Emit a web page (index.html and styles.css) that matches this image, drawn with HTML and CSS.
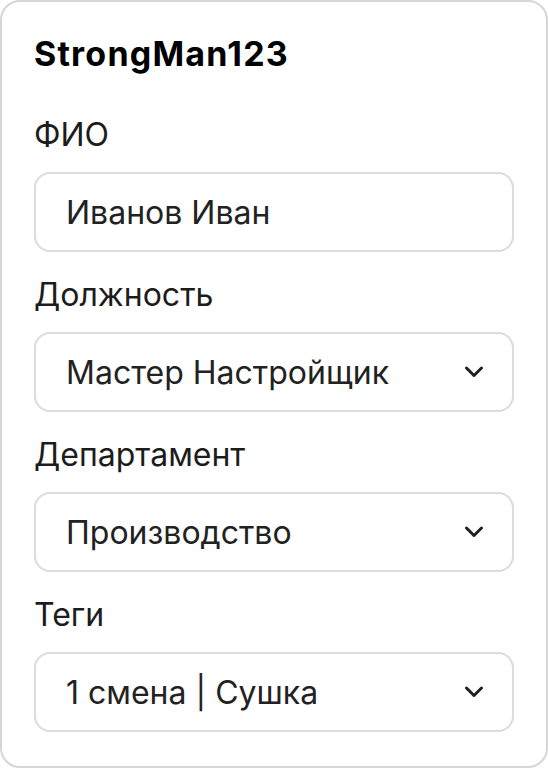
FILE: index.html
```html
<!DOCTYPE html>
<html lang="ru">
<head>
    <meta charset="UTF-8">
    <meta name="viewport" content="width=device-width, initial-scale=1.0">
    <title>Профиль</title>
    <link rel="stylesheet" href="styles.css">
</head>
<body>
    <div class="card">
        <h2 class="user-name">StrongMan123</h2>

        <div class="field">
            <label class="field-label">ФИО</label>
            <div class="field-box">Иванов Иван</div>
        </div>

        <div class="field">
            <label class="field-label">Должность</label>
            <div class="field-box select">
                <span>Мастер Настройщик</span>
                <svg class="chevron" viewBox="0 0 20 12"><path d="M2.5 2L10 9.5 17.5 2"/></svg>
            </div>
        </div>

        <div class="field">
            <label class="field-label">Департамент</label>
            <div class="field-box select">
                <span>Производство</span>
                <svg class="chevron" viewBox="0 0 20 12"><path d="M2.5 2L10 9.5 17.5 2"/></svg>
            </div>
        </div>

        <div class="field">
            <label class="field-label">Теги</label>
            <div class="field-box select">
                <span>1 смена | Сушка</span>
                <svg class="chevron" viewBox="0 0 20 12"><path d="M2.5 2L10 9.5 17.5 2"/></svg>
            </div>
        </div>
    </div>
</body>
</html>
```

FILE: styles.css
```css
* {
    margin: 0;
    padding: 0;
    box-sizing: border-box;
}
body {
    font-family: Inter, "Noto Sans", sans-serif;
    background-color: #fff;
    color: #1c1c1c;
}
.card {
    width: 548px;
    height: 768px;
    border: 2px solid #d6d6d6;
    border-radius: 20px;
    padding: 32px 32px 0;
    display: flex;
    flex-direction: column;
    gap: 23px;
}
.user-name {
    font-size: 34px;
    font-weight: 700;
    line-height: 40px;
    letter-spacing: 1.2px;
    color: #000;
    margin-bottom: 18px;
}
.field {
    display: flex;
    flex-direction: column;
    gap: 17px;
}
.field-label {
    font-size: 32px;
    line-height: 40px;
}
.field-box {
    height: 80px;
    border: 2px solid #dcdcdc;
    border-radius: 16px;
    padding: 0 28px 0 30px;
    display: flex;
    align-items: center;
    font-size: 32px;
    color: #222;
}
.select {
    justify-content: space-between;
}
.chevron {
    width: 20px;
    height: 12px;
    fill: none;
    stroke: #222;
    stroke-width: 3;
    stroke-linecap: round;
    stroke-linejoin: round;
}
```
